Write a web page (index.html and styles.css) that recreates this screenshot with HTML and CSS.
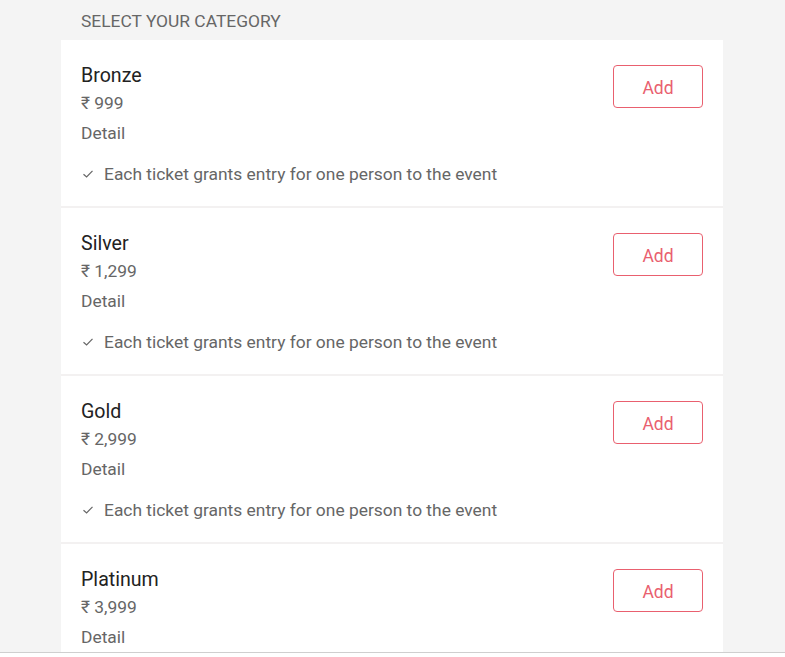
FILE: index.html
```html
<!DOCTYPE html>
<html lang="en">
<head>
<meta charset="utf-8">
<title>Select your category</title>
<link rel="stylesheet" href="styles.css">
</head>
<body>
<main class="page">
  <h2 class="heading">SELECT YOUR CATEGORY</h2>
  <section class="list">
    <article class="card">
      <div class="info">
        <h3 class="name">Bronze</h3>
        <div class="price">₹ 999</div>
        <div class="detail">Detail</div>
        <div class="feature"><svg class="check" width="12" height="10" viewBox="0 0 12 10"><path d="M1.5 5.2 L4.6 8 L10.5 1.8" fill="none" stroke="#666" stroke-width="1.2"/></svg>Each ticket grants entry for one person to the event</div>
      </div>
      <button class="add">Add</button>
    </article>
    <article class="card">
      <div class="info">
        <h3 class="name">Silver</h3>
        <div class="price">₹ 1,299</div>
        <div class="detail">Detail</div>
        <div class="feature"><svg class="check" width="12" height="10" viewBox="0 0 12 10"><path d="M1.5 5.2 L4.6 8 L10.5 1.8" fill="none" stroke="#666" stroke-width="1.2"/></svg>Each ticket grants entry for one person to the event</div>
      </div>
      <button class="add">Add</button>
    </article>
    <article class="card">
      <div class="info">
        <h3 class="name">Gold</h3>
        <div class="price">₹ 2,999</div>
        <div class="detail">Detail</div>
        <div class="feature"><svg class="check" width="12" height="10" viewBox="0 0 12 10"><path d="M1.5 5.2 L4.6 8 L10.5 1.8" fill="none" stroke="#666" stroke-width="1.2"/></svg>Each ticket grants entry for one person to the event</div>
      </div>
      <button class="add">Add</button>
    </article>
    <article class="card">
      <div class="info">
        <h3 class="name">Platinum</h3>
        <div class="price">₹ 3,999</div>
        <div class="detail">Detail</div>
        <div class="feature"><svg class="check" width="12" height="10" viewBox="0 0 12 10"><path d="M1.5 5.2 L4.6 8 L10.5 1.8" fill="none" stroke="#666" stroke-width="1.2"/></svg>Each ticket grants entry for one person to the event</div>
      </div>
      <button class="add">Add</button>
    </article>
  </section>
</main>
<footer class="footer"></footer>
</body>
</html>
```

FILE: styles.css
```css
html, body {
  margin: 0;
  padding: 0;
  background: #f4f4f4;
  font-family: Roboto, "Liberation Sans", Arial, sans-serif;
  overflow: hidden;
}
.page {
  width: 662px;
  margin-left: 61px;
}
.heading {
  margin: 0;
  height: 40px;
  line-height: 43px;
  padding-left: 20px;
  font-size: 17.4px;
  font-weight: 400;
  color: #666;
}
.list {
  background: #fff;
}
.card {
  display: flex;
  justify-content: space-between;
  align-items: flex-start;
  padding: 25px 20px 22px 20px;
  border-bottom: 2px solid #f3f1f1;
}
.name {
  margin: 0;
  font-size: 19.6px;
  font-weight: 400;
  line-height: 22px;
  color: #222;
}
.price {
  margin-top: 6px;
  font-size: 17.4px;
  line-height: 20px;
  color: #666;
}
.detail {
  margin-top: 10px;
  font-size: 17.4px;
  line-height: 20px;
  color: #666;
}
.feature {
  margin-top: 21px;
  font-size: 17.4px;
  line-height: 20px;
  color: #666;
  display: flex;
  align-items: center;
}
.check {
  margin-left: 1px;
  margin-right: 10px;
}
.add {
  width: 90px;
  height: 43px;
  border: 1px solid #e9606f;
  border-radius: 4px;
  background: #fff;
  color: #e9606f;
  font-family: Roboto, "Liberation Sans", Arial, sans-serif;
  font-size: 17.5px;
  padding: 2px 0 0 0;
  cursor: pointer;
}
.footer {
  position: fixed;
  left: 0;
  right: 0;
  bottom: 0;
  height: 4px;
  background: #fff;
  border-top: 1px solid #cfcfcf;
}
```
